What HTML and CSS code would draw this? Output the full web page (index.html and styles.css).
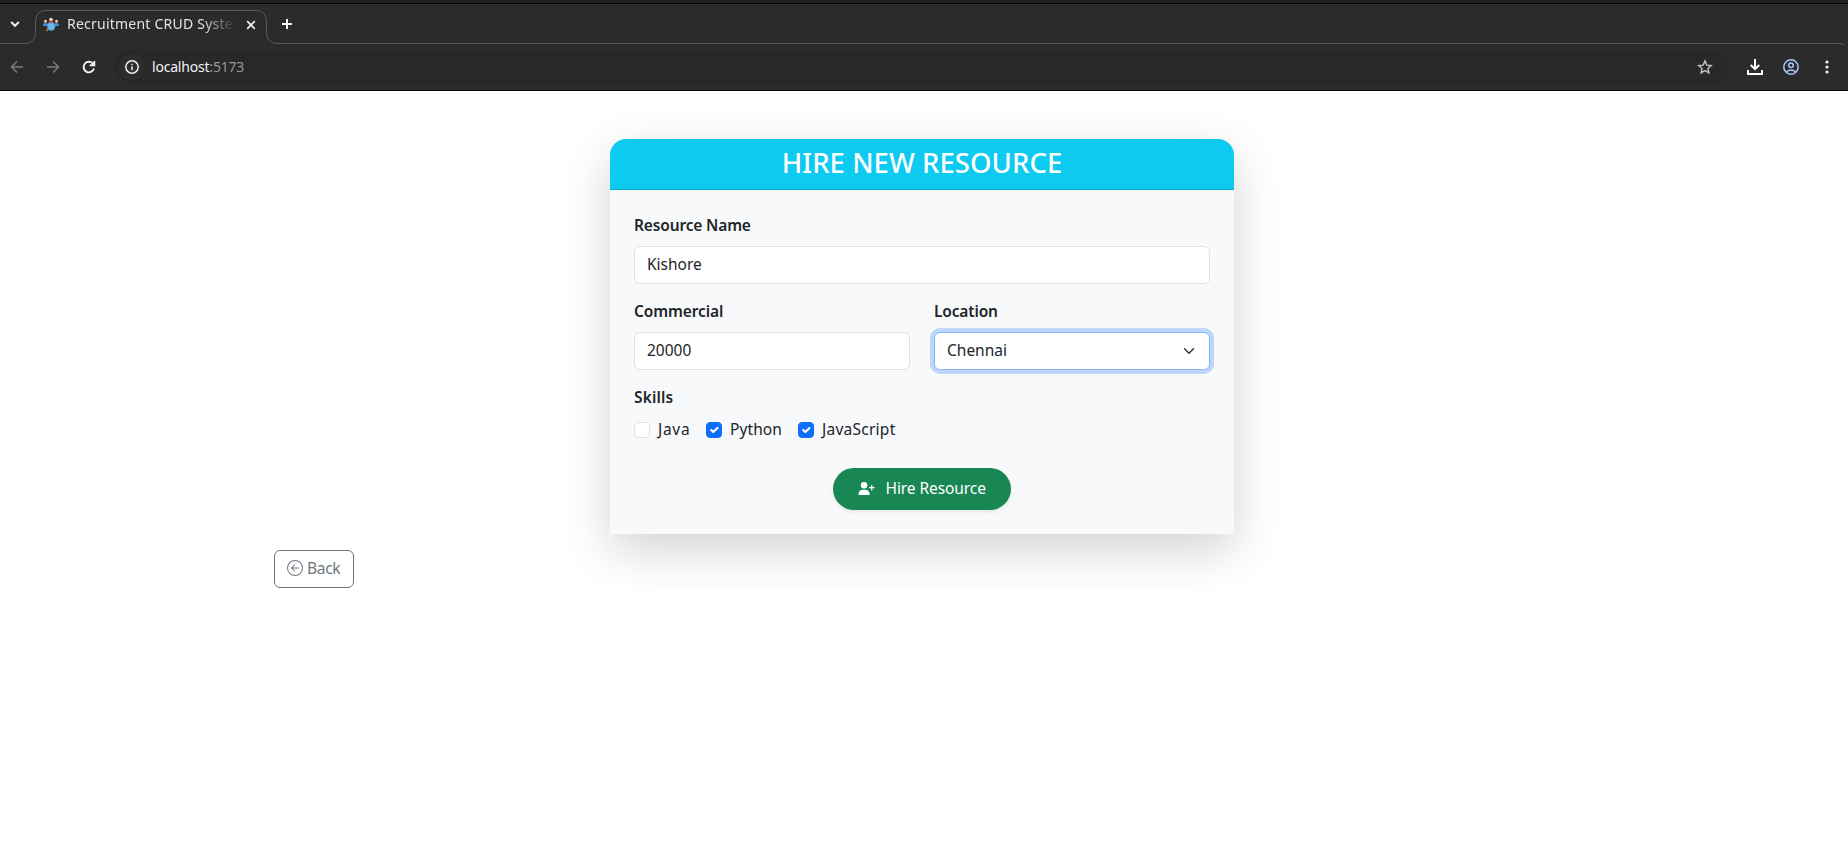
FILE: index.html
```html
<!DOCTYPE html>
<html lang="en">
<head>
<meta charset="utf-8">
<title>Recruitment CRUD System</title>
<link rel="stylesheet" href="styles.css">
</head>
<body>
<header class="browser">
  <div class="tabstrip">
    <svg class="tab-outline" width="1848" height="41" viewBox="0 0 1848 41" fill="none" stroke="#5b5b5b"><path d="M0 39.500H24Q35.500 39.500 35.500 28V18Q35.500 6.500 46 6.500H256Q266.500 6.500 266.500 18V28Q266.500 39.500 278 39.500H1840Q1845 39.500 1848 44"/></svg>
    <svg class="tab-search" width="16" height="16" viewBox="0 0 16 16" fill="none" stroke="#f0f0f0" stroke-width="2"><path d="M4.200 6L8 9.800L11.800 6"/></svg>
    <div class="tab">
      <svg class="favicon" width="16" height="16" viewBox="0 0 16 16"><circle cx="2.500" cy="4.300" r="1.500" fill="#f3c9a5"/><circle cx="8" cy="2.500" r="1.800" fill="#f3d9c0"/><circle cx="13.500" cy="4.300" r="1.500" fill="#f3c9a5"/><path d="M0 9V7.500Q0 6 2.500 6T5 7.500V9zM11 9V7.500Q11 6 13.500 6T16 7.500V9z" fill="#3f8fe0"/><path d="M5 7V5.500Q5 4.300 8 4.300T11 5.500V7z" fill="#d9302f"/><path d="M5.500 11.500L3.500 14" stroke="#b9612c" stroke-width="2"/><circle cx="8.200" cy="9.500" r="3.900" fill="#6db9ea" stroke="#4b8fc9" stroke-width=".8"/></svg>
      <span class="tab-title">Recruitment CRUD Syste</span>
      <svg class="tab-close" width="10" height="10" viewBox="0 0 10 10" stroke="#f0f0f0" stroke-width="1.700"><path d="M1.200 1.200L8.800 8.800M8.800 1.200L1.200 8.800"/></svg>
    </div>
    <svg class="new-tab" width="12" height="12" viewBox="0 0 12 12" stroke="#f4f4f4" stroke-width="2"><path d="M6 1V11M1 6H11"/></svg>
  </div>
  <div class="toolbar">
    <div class="nav">
      <svg width="14" height="14" viewBox="0 0 14 14" fill="none" stroke="#7b7b7b" stroke-width="1.500"><path d="M13 7H2M7 1.500L1.500 7L7 12.500"/></svg>
      <svg width="14" height="14" viewBox="0 0 14 14" fill="none" stroke="#7b7b7b" stroke-width="1.500"><path d="M1 7H12M7 1.500L12.500 7L7 12.500"/></svg>
      <svg width="14" height="14" viewBox="0 0 14 14" fill="none" stroke="#f2f2f2" stroke-width="1.900"><path d="M12 8.500A5.300 5.300 0 1 1 11.400 4.200"/><path d="M12.300 1V5.200H7.800"/><path d="M12.500 2.500V5.500H9.500z" fill="#f2f2f2" stroke="none"/></svg>
    </div>
    <div class="omnibox">
      <span class="site-info"><svg width="16" height="16" viewBox="0 0 16 16" fill="none" stroke="#eee" stroke-width="1.500"><circle cx="8" cy="8" r="6.200"/><path d="M8 7.200V11.200M8 4.700V6.100"/></svg></span>
      <span class="url">localhost<span class="port">:5173</span></span>
      <svg class="star" width="16" height="16" viewBox="0 0 16 16" fill="none" stroke="#c4c4c4" stroke-width="1.400"><path d="M8 1.900L9.800 6.100L14.300 6.500L10.900 9.500L11.900 13.900L8 11.600L4.100 13.900L5.100 9.500L1.700 6.500L6.200 6.100z"/></svg>
    </div>
    <svg class="download" width="16" height="16" viewBox="0 0 16 16" fill="none" stroke="#fff" stroke-width="2"><path d="M8 0V10M3.800 6L8 10.200L12.200 6M1 11V15H15V11"/></svg>
    <svg class="profile" width="16" height="16" viewBox="0 0 16 16" fill="none" stroke="#a8c7fa" stroke-width="1.500"><circle cx="8" cy="8" r="7.200"/><circle cx="8" cy="6.300" r="2.300"/><path d="M3.200 13Q8 9 12.800 13"/></svg>
    <svg class="menu" width="4" height="14" viewBox="0 0 4 14" fill="#f0f0f0"><circle cx="2" cy="2" r="1.600"/><circle cx="2" cy="7" r="1.600"/><circle cx="2" cy="12" r="1.600"/></svg>
  </div>
</header>
<main class="page">
  <section class="card">
    <div class="card-header"><h3>HIRE NEW RESOURCE</h3></div>
    <form class="card-body">
      <div class="field"><span class="label">Resource Name</span><div class="control">Kishore</div></div>
      <div class="row">
        <div class="field"><span class="label commercial">Commercial</span><div class="control">20000</div></div>
        <div class="field"><span class="label">Location</span><div class="control focused">Chennai<svg width="16" height="12" viewBox="0 0 16 16" fill="none" stroke="#343a40" stroke-width="2" stroke-linecap="round" stroke-linejoin="round"><path d="m2 5 6 6 6-6"/></svg></div></div>
      </div>
      <div class="field"><span class="label skills">Skills</span>
        <div class="checks">
          <span class="check java"><i class="box"></i><span>Java</span></span>
          <span class="check python"><i class="box on"><svg width="14" height="14" viewBox="0 0 20 20" fill="none" stroke="#fff" stroke-width="3" stroke-linecap="round" stroke-linejoin="round"><path d="m6 10 3 3 6-6"/></svg></i><span>Python</span></span>
          <span class="check javascript"><i class="box on"><svg width="14" height="14" viewBox="0 0 20 20" fill="none" stroke="#fff" stroke-width="3" stroke-linecap="round" stroke-linejoin="round"><path d="m6 10 3 3 6-6"/></svg></i><span>JavaScript</span></span>
        </div>
      </div>
      <div class="hire"><svg width="17" height="13" viewBox="0 0 640 512" fill="#fff"><path d="M96 128a128 128 0 1 1 256 0A128 128 0 1 1 96 128zM0 482.300C0 383.800 79.800 304 178.300 304h91.400C368.200 304 448 383.800 448 482.300c0 16.400-13.300 29.700-29.700 29.700H29.700C13.300 512 0 498.700 0 482.300zM504 312V248H440c-13.300 0-24-10.700-24-24s10.700-24 24-24h64V136c0-13.300 10.700-24 24-24s24 10.700 24 24v64h64c13.300 0 24 10.700 24 24s-10.700 24-24 24H552v64c0 13.300-10.700 24-24 24s-24-10.700-24-24z"/></svg><span>Hire Resource</span></div>
    </form>
  </section>
  <div class="back"><svg width="16" height="16" viewBox="0 0 16 16" fill="#6c757d"><path fill-rule="evenodd" d="M1 8a7 7 0 1 0 14 0A7 7 0 0 0 1 8m15 0A8 8 0 1 1 0 8a8 8 0 0 1 16 0m-4.500-.5a.5.5 0 0 1 0 1H5.707l2.147 2.146a.5.5 0 0 1-.708.708l-3-3a.5.5 0 0 1 0-.708l3-3a.5.5 0 1 1 .708.708L5.707 7.500z"/></svg><span>Back</span></div>
</main>
</body>
</html>
```
FILE: styles.css
```css
* { box-sizing: border-box; }
body { margin: 0; background: #fff; color: #212529; font: 15.5px/24px "Noto Sans", sans-serif; overflow: hidden; }
svg { display: block; flex: none; }
.browser { height: 91px; background: #2b2b2b; border-top: 3px solid #202020; border-bottom: 1px solid #0c0c0c; }
.tabstrip { position: relative; height: 41px; border-top: 1px solid #000; display: flex; align-items: flex-start; }
.tab-outline { position: absolute; left: 0; top: 0; }
.tab-search { margin: 12px 0 0 7px; }
.tab { display: flex; align-items: center; height: 27px; margin: 7px 0 0 20px; width: 213px; }
.tab-title { width: 168px; height: 26px; margin-left: 8px; overflow: hidden; white-space: nowrap; color: #e3e3e3; font-size: 14px; letter-spacing: .23px; -webkit-mask-image: linear-gradient(90deg, #000 80%, transparent); mask-image: linear-gradient(90deg, #000 80%, transparent); }
.tab-close { margin-left: 11px; }
.new-tab { margin: 14px 0 0 25px; }
.toolbar { height: 46px; display: flex; align-items: center; padding: 0 19px 0 10px; }
.nav { display: flex; gap: 22px; width: 105px; }
.omnibox { height: 34px; width: 1614px; border-radius: 17px; background: #282828; display: flex; align-items: center; padding: 0 16px 0 4px; }
.site-info { width: 26px; height: 26px; border-radius: 50%; background: #2d2d2d; display: grid; place-items: center; }
.url { margin-left: 7px; color: #f0f0f0; font-size: 14px; letter-spacing: -.2px; }
.port { color: #969696; }
.star { margin-left: auto; }
.download { margin-left: 18px; }
.profile { margin-left: 20px; }
.menu { margin-left: auto; }
.page { padding: 48px 266px 0 262px; }
.card { width: 624px; height: 395px; margin: 0 auto; background: #f8f9fa; border-radius: 16px 16px 0 0; box-shadow: 0 16px 48px rgba(0,0,0,.175); }
.card-header { height: 51px; padding-top: 8px; background: #0dcaf0; border-bottom: 1px solid #0ba8c7; border-radius: 16px 16px 0 0; text-align: center; }
h3 { margin: 0; color: #fff; font-size: 27.5px; line-height: 32px; font-weight: 500; letter-spacing: .05px; }
.card-body { padding: 24px; }
.field { margin-bottom: 16px; }
.label { display: block; height: 24px; margin-bottom: 8px; font-weight: 600; line-height: 22px; letter-spacing: -.15px; }
.commercial { letter-spacing: -.1px; }
.skills { letter-spacing: .15px; }
.control { height: 38px; padding: 0 12px 2px; display: flex; align-items: center; justify-content: space-between; border: 1px solid #dee2e6; border-radius: 6px; background: #fff; }
.row { display: grid; grid-template-columns: 1fr 1fr; gap: 24px; }
.focused { border-color: #86b7fe; box-shadow: 0 0 0 4px rgba(13,110,253,.25); }
.focused svg { margin-top: 2px; }
.checks { display: flex; height: 24px; }
.check { display: flex; align-items: center; gap: 8px; line-height: 22px; }
.check span { height: 24px; }
.java { width: 72px; letter-spacing: .7px; }
.python { width: 92px; letter-spacing: .1px; }
.javascript { letter-spacing: .25px; }
.box { width: 16px; height: 16px; border: 1px solid #dee2e6; border-radius: 4px; background: #fff; }
.on { background: #0d6efd; border-color: #0d6efd; }
.hire { width: 178px; height: 42px; margin: 26px auto 0; padding: 0 0 2px 25px; border-radius: 21px; background: #198754; color: #fff; display: flex; align-items: center; gap: 10.5px; letter-spacing: -.08px; box-shadow: 0 2px 4px rgba(0,0,0,.075); }
.back { width: 80px; height: 38px; margin: 16px 0 0 12px; border: 1px solid #6c757d; border-radius: 6px; color: #6c757d; display: flex; align-items: center; padding: 0 0 2px 12px; gap: 4px; letter-spacing: -.3px; }
```
